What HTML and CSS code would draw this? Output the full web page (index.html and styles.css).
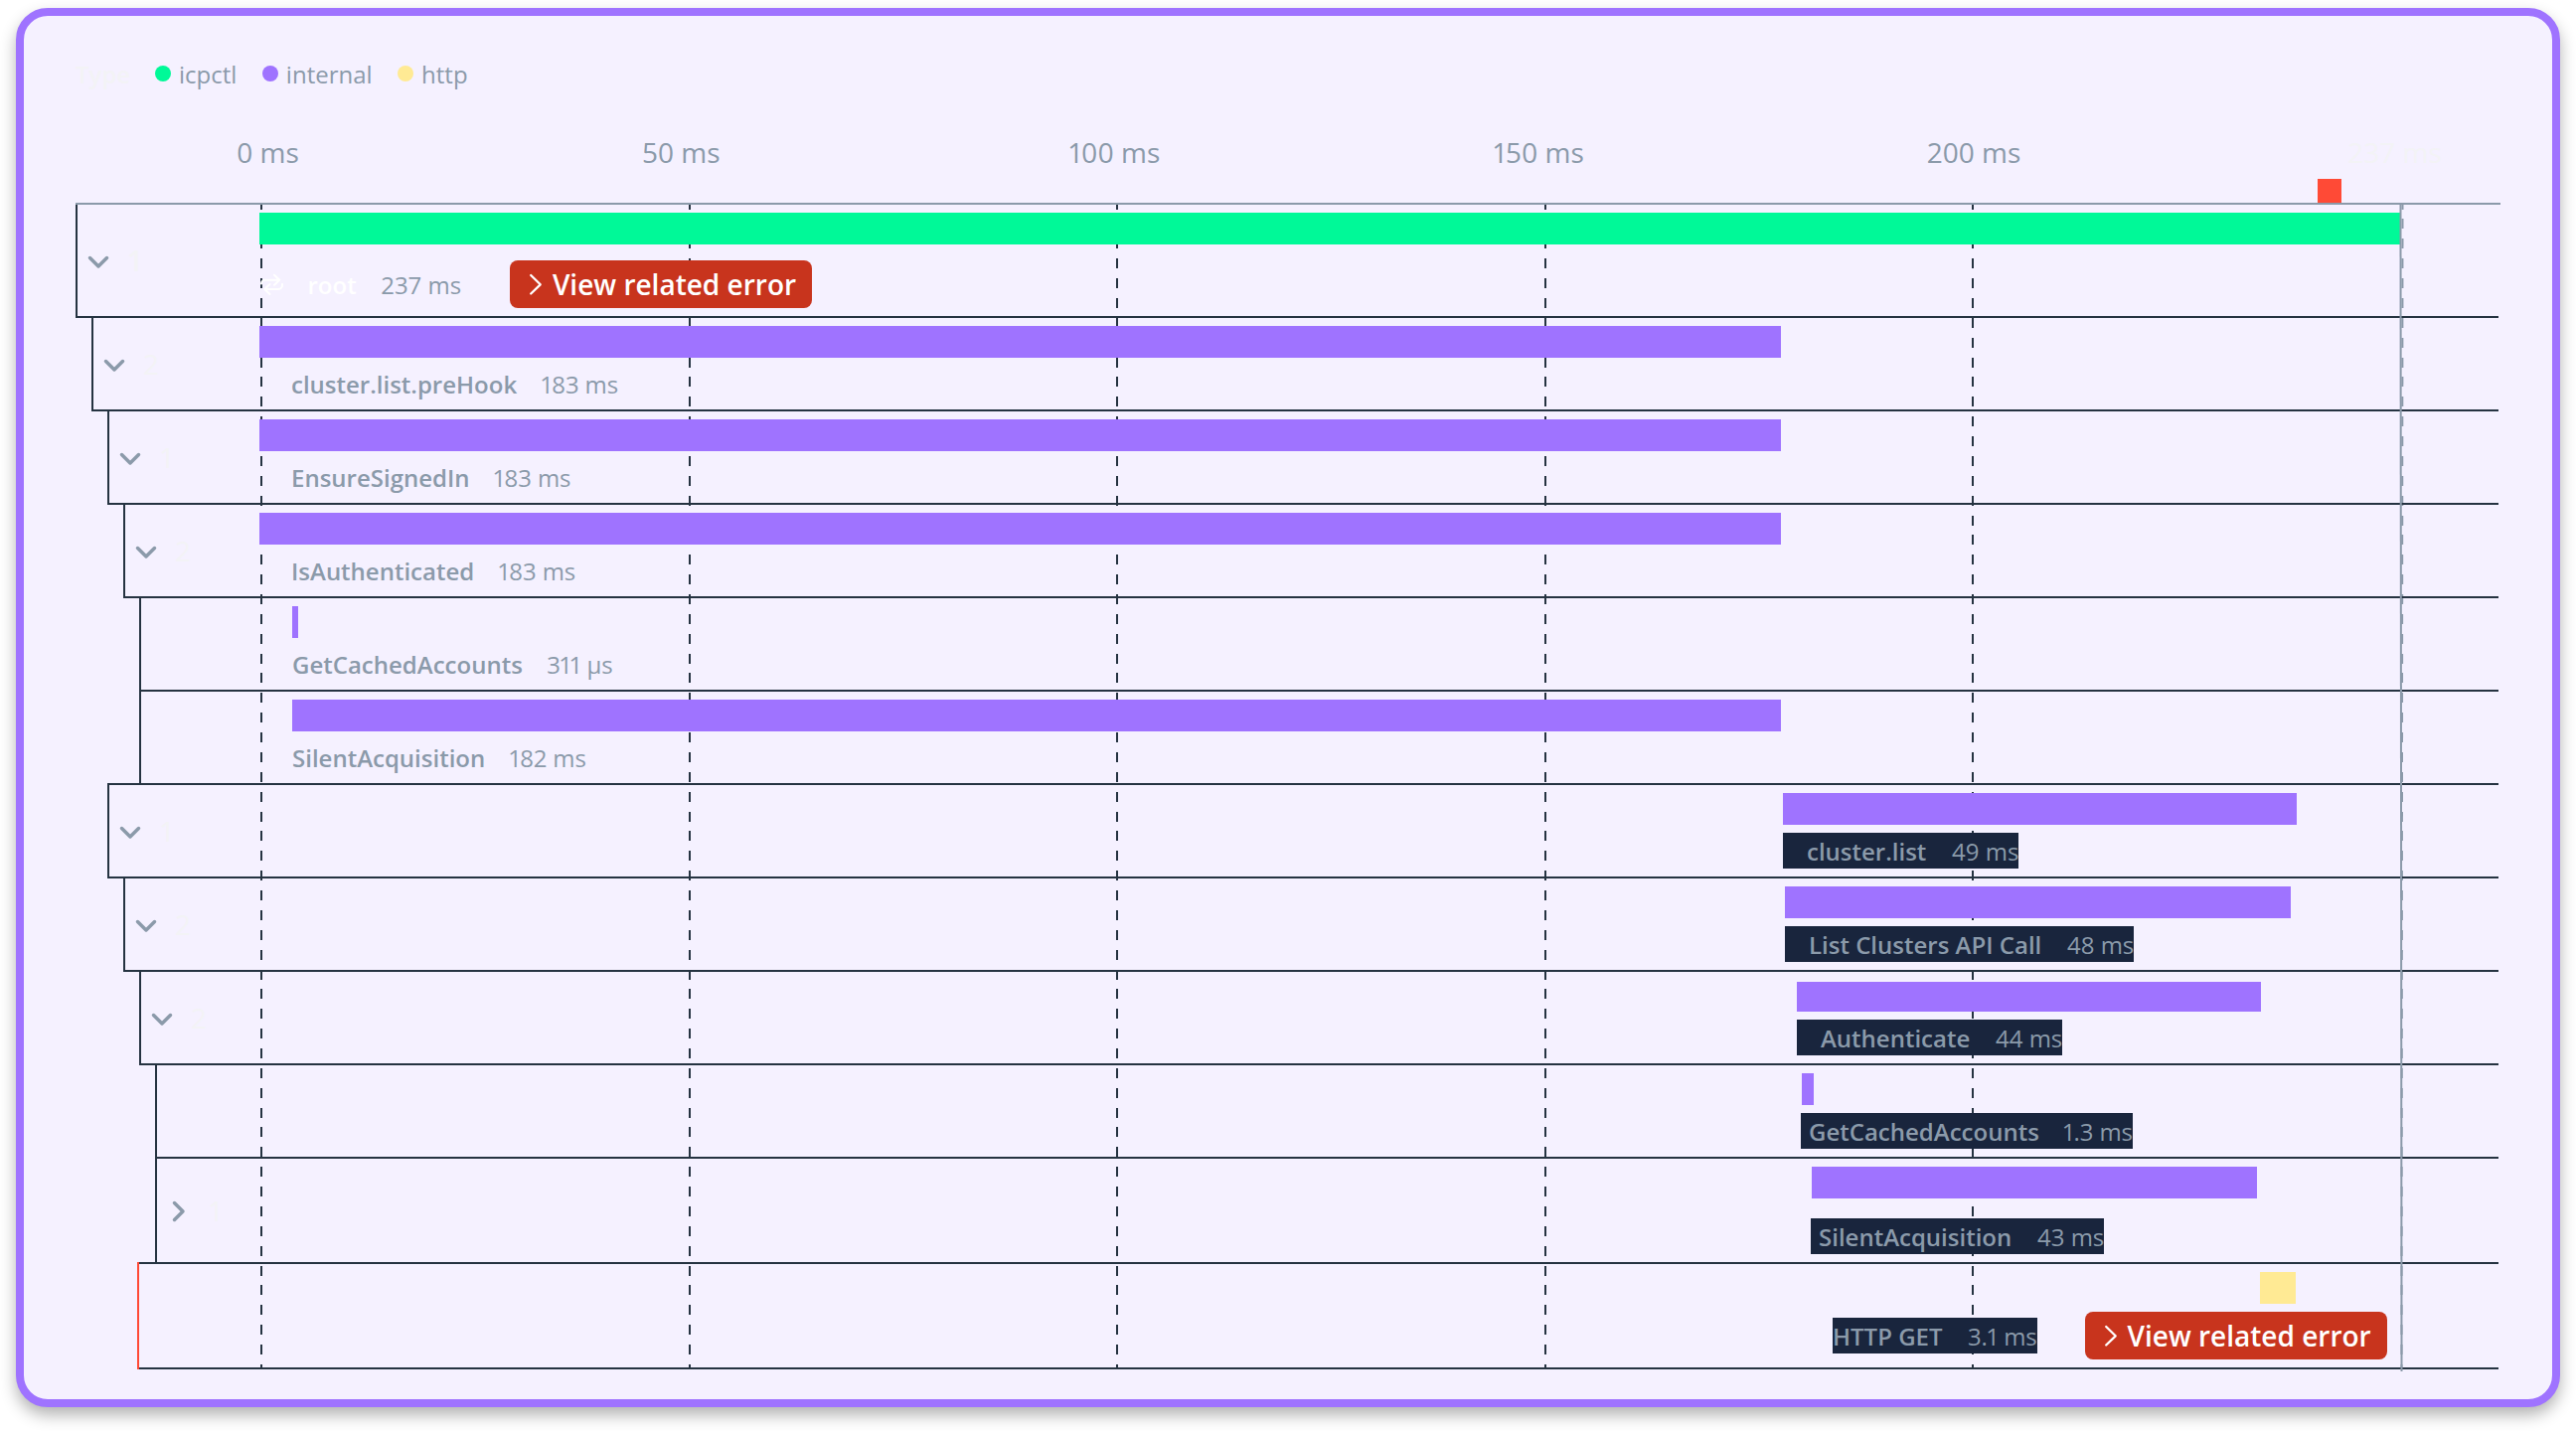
FILE: index.html
```html
<!DOCTYPE html>
<html lang="en">
<head>
<meta charset="utf-8">
<title>Trace timeline</title>
<link rel="stylesheet" href="styles.css">
</head>
<body>
<svg width="0" height="0" class="defs">
  <symbol id="down" viewBox="0 0 24 16"><path d="M3.5 3.5 12 12l8.500-8.500"/></symbol>
  <symbol id="right" viewBox="0 0 16 24"><path d="M3.500 3.500 12 12l-8.500 8.500"/></symbol>
  <symbol id="open" viewBox="0 0 16 24"><path d="M3.200 3 12.700 12.300 3.200 21.500"/></symbol>
</svg>
<main class="card">
  <header class="legend">
    <b>Type</b>
    <span class="key"><i class="dot green"></i>icpctl</span>
    <span class="key"><i class="dot purple"></i>internal</span>
    <span class="key"><i class="dot yellow"></i>http</span>
  </header>
  <div class="axis">
    <span>0 ms</span><span>50 ms</span><span class="prop">100 ms</span><span class="prop">150 ms</span><span>200 ms</span><span class="end">237 ms</span>
  </div>
  <div class="marks"><i class="mark"></i></div>
  <section class="rows">
    <div class="grid">
      <i style="left:186px"></i><i style="left:616.6px"></i><i style="left:1047.2px"></i><i style="left:1477.7px"></i><i style="left:1908.3px"></i><i class="last" style="left:2339.5px"></i>
    </div>
    <div class="row d0 tall">
      <div class="toggle"><svg class="down"><use href="#down"/></svg><span>1</span></div>
      <div class="track">
        <div class="bar green" style="width:2154.5px"></div>
        <div class="label root"><svg class="loop" viewBox="0 0 24 24"><path d="M2 11.500a4 4 0 0 1 4-3.800H20M15 2.700l5.300 5-5.300 5M23 12v1a4 4 0 0 1-4 4H6M10.500 12l-5.300 5 5.300 5"/></svg><b>root</b><span>237 ms</span><a class="error"><svg><use href="#open"/></svg>View related error</a></div>
      </div>
    </div>
    <div class="row d1">
      <div class="toggle"><svg class="down"><use href="#down"/></svg><span>2</span></div>
      <div class="track"><div class="bar purple" style="width:1531px"></div><div class="label" style="margin-left:32px"><b>cluster.list.preHook</b><span class="prop">183 ms</span></div></div>
    </div>
    <div class="row d2">
      <div class="toggle"><svg class="down"><use href="#down"/></svg><span>1</span></div>
      <div class="track"><div class="bar purple" style="width:1531px"></div><div class="label" style="margin-left:32px"><b>EnsureSignedIn</b><span class="prop">183 ms</span></div></div>
    </div>
    <div class="row d3">
      <div class="toggle"><svg class="down"><use href="#down"/></svg><span>2</span></div>
      <div class="track"><div class="bar purple" style="width:1531px"></div><div class="label" style="margin-left:32px"><b>IsAuthenticated</b><span class="prop">183 ms</span></div></div>
    </div>
    <div class="row d4">
      <div class="toggle"></div>
      <div class="track"><div class="bar purple" style="margin-left:33px;width:6px"></div><div class="label" style="margin-left:33px"><b>GetCachedAccounts</b><span class="prop">311 µs</span></div></div>
    </div>
    <div class="row d4">
      <div class="toggle"></div>
      <div class="track"><div class="bar purple" style="margin-left:33px;width:1498px"></div><div class="label" style="margin-left:33px"><b>SilentAcquisition</b><span class="prop">182 ms</span></div></div>
    </div>
    <div class="row d2">
      <div class="toggle"><svg class="down"><use href="#down"/></svg><span>1</span></div>
      <div class="track"><div class="bar purple" style="margin-left:1533px;width:517px"></div><div class="label dark wide" style="margin-left:1533px"><b>cluster.list</b><span>49 ms</span></div></div>
    </div>
    <div class="row d3">
      <div class="toggle"><svg class="down"><use href="#down"/></svg><span>2</span></div>
      <div class="track"><div class="bar purple" style="margin-left:1535px;width:509px"></div><div class="label dark wide" style="margin-left:1535px"><b>List Clusters API Call</b><span>48 ms</span></div></div>
    </div>
    <div class="row d4">
      <div class="toggle"><svg class="down"><use href="#down"/></svg><span>2</span></div>
      <div class="track"><div class="bar purple thin" style="margin-left:1547px;width:467px"></div><div class="label dark wide" style="margin-left:1547px"><b>Authenticate</b><span>44 ms</span></div></div>
    </div>
    <div class="row d5">
      <div class="toggle"></div>
      <div class="track"><div class="bar purple" style="margin-left:1552px;width:12px"></div><div class="label dark near" style="margin-left:1551px"><b>GetCachedAccounts</b><span class="prop">1.3 ms</span></div></div>
    </div>
    <div class="row d5 mid">
      <div class="toggle"><svg class="right"><use href="#right"/></svg><span>1</span></div>
      <div class="track"><div class="bar purple" style="margin-left:1562px;width:448px"></div><div class="label dark near low" style="margin-left:1561px"><b>SilentAcquisition</b><span>43 ms</span></div></div>
    </div>
    <div class="row failed mid">
      <div class="toggle"></div>
      <div class="track"><div class="bar yellow" style="margin-left:2013px;width:36px"></div><div class="pair" style="margin-left:1583px"><div class="label dark"><b>HTTP GET</b><span class="prop">3.1 ms</span></div><a class="error"><svg><use href="#open"/></svg>View related error</a></div></div>
    </div>
    <i class="finish"></i>
  </section>
</main>
</body>
</html>
```

FILE: styles.css
```css
* { box-sizing: border-box; }
body { min-height: 1440px; margin: 0; padding: 8px 16px; background: #fff; font: 400 24px/36px "Open Sans", sans-serif; color: #8b9aaa; }
.defs { position: absolute; }
svg { fill: none; stroke: currentColor; stroke-linecap: round; stroke-linejoin: round; flex: none; }
b { font-weight: 600; }
.prop { font-feature-settings: "pnum"; }
.card { height: 1408px; padding: 41px 52px 39px; border: 8px solid #9f73ff; border-radius: 32px; background: #f5f1ff; box-shadow: 0 8px 16px rgba(0, 0, 0, .3); }
.green { background: #00f998; }
.purple { background: #9f73ff; }
.yellow { background: #ffea94; }

.legend { display: flex; height: 36px; align-items: center; }
.legend b { width: 80px; color: #f3f3f6; }
.key { display: flex; align-items: center; height: 36px; margin-right: 25.500px; }
.dot { width: 16px; height: 16px; margin: 0 8px 2px 0; border-radius: 50%; }

.axis { display: grid; grid-template-columns: 407.800px 430px 427px 435.800px 423.500px auto; margin: 39.500px 0 1.500px; padding-left: 162.200px; font-size: 28px; line-height: 40px; white-space: nowrap; }
.axis .end { color: #f3f3f6; }
.marks { display: flex; height: 32px; width: 2440px; align-items: flex-end; border-bottom: 2px solid #8b9aaa; }
.mark { width: 24px; height: 24px; margin-left: 2256px; background: #ff4a36; }

.rows { position: relative; width: 2438px; }
.grid i { position: absolute; top: 0; bottom: 2px; width: 2px; background: repeating-linear-gradient(to bottom, #253341 -5.400px, #253341 4.600px, transparent 4.600px, transparent 14.470px); }
.grid .last { background: repeating-linear-gradient(to bottom, #8b9aaa -5.400px, #8b9aaa 4.600px, transparent 4.600px, transparent 14.470px); transform: rotate(.05deg); }
.row { position: relative; display: flex; height: 96px; margin-top: -2px; border: solid #253341; border-width: 2px 0 2px 2px; }
.row.tall { height: 114px; margin-top: 0; border-top: 0; }
.row.mid { height: 108px; }
.toggle { display: flex; align-items: center; }
.toggle span { font-size: 28px; color: #f3f3f6; }
.tall .toggle span { font-weight: 600; }
.down, .right { stroke-width: 3.500px; color: #8b9aaa; }
.down { width: 24px; height: 16px; margin: 3px 17px 0 9px; }
.right { width: 16px; height: 24px; margin: 1px 21px 0 14px; }
.d0 .toggle { width: 183px; }
.d1 { margin-left: 16px; } .d1 .toggle { width: 167px; }
.d2 { margin-left: 32px; } .d2 .toggle { width: 151px; }
.d3 { margin-left: 48px; } .d3 .toggle { width: 135px; }
.d4 { margin-left: 64px; } .d4 .toggle { width: 119px; }
.d5 { margin-left: 80px; } .d5 .toggle { width: 103px; }
.failed { margin-left: 64px; border-left: 0; box-shadow: -2px 0 0 #ff4a36; }
.failed .toggle { width: 121px; }

.track { display: flex; flex-direction: column; align-items: flex-start; padding-top: 8px; white-space: nowrap; }
.bar { height: 32px; flex: none; }
.bar.thin { height: 30px; margin-top: 2px; }
.label { display: flex; align-items: center; gap: 25.700px; height: 36px; margin-top: 8px; padding-top: 2px; }
.label .prop { margin-left: -1.200px; letter-spacing: -.1px; }
.dark { background: #19253d; }
.wide { padding-left: 24px; }
.near { padding-left: 8px; }
.low { margin-top: 20px; }
.root { gap: 24.500px; height: 48px; margin-top: 16px; padding-top: 0; }
.root b, .root span { padding-top: 1px; }
.root b { color: #fff; }
.loop { width: 24px; height: 24px; stroke-width: 2px; color: #fff; }
.pair { display: flex; align-items: center; gap: 48px; margin-top: 8px; }
.pair .label { width: 206px; margin-top: 0; }
.pair .prop { margin-left: -.2px; }
.error { display: flex; align-items: center; width: 304px; height: 48px; padding-left: 18px; border-radius: 8px; background: #c8341d; color: #fff; font-size: 28px; font-weight: 600; }
.error svg { width: 16px; height: 24px; margin-right: 8.500px; stroke-width: 2.300px; }
.root .error { margin-left: 24.700px; }
.finish { position: absolute; left: 2339px; top: 0; bottom: -2px; width: 2px; background: #8b9aaa; transform: rotate(-.05deg); }
```
